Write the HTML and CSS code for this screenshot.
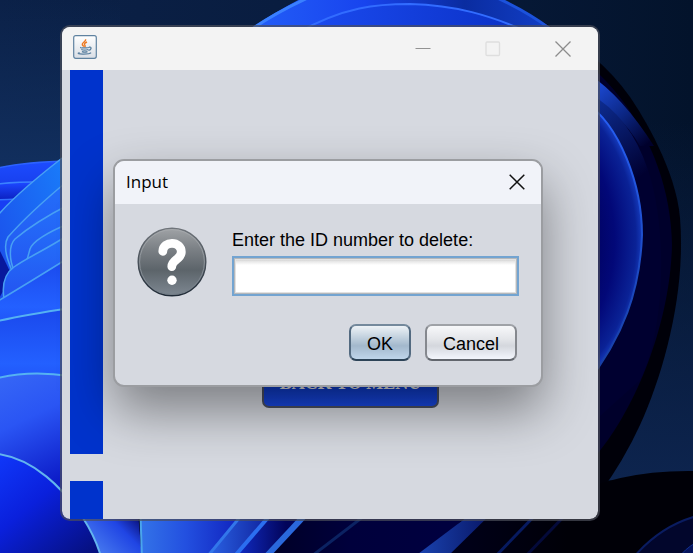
FILE: index.html
```html
<!DOCTYPE html>
<html lang="en">
<head>
<meta charset="utf-8">
<meta name="viewport" content="width=device-width, initial-scale=1">
<title>Input</title>
<link rel="stylesheet" href="styles.css">
</head>
<body>
<div class="desktop">
  <svg class="wallpaper" viewBox="0 0 693 553" preserveAspectRatio="xMidYMid slice" aria-hidden="true">
    <defs>
      <linearGradient id="sky" x1="0" y1="0" x2="1" y2="0"><stop offset="0" stop-color="#0b2148"/><stop offset=".6" stop-color="#081b3c"/><stop offset="1" stop-color="#03132b"/></linearGradient>
      <linearGradient id="glow" x1="0" y1="0" x2="0" y2="1"><stop offset="0" stop-color="#123060" stop-opacity="0"/><stop offset="1" stop-color="#123060"/></linearGradient>
      <linearGradient id="glowRight" x1="0" y1="0" x2="0" y2="1"><stop offset="0" stop-color="#0d244e" stop-opacity="0"/><stop offset="1" stop-color="#0d244e"/></linearGradient>
      <linearGradient id="arc" x1="0" y1="0" x2="1" y2="0"><stop offset="0" stop-color="#2460f8"/><stop offset=".4" stop-color="#1844ee"/><stop offset=".72" stop-color="#0a2ca0"/><stop offset="1" stop-color="#123fc8"/></linearGradient>
      <linearGradient id="arcIn" x1="0" y1="0" x2="1" y2="0"><stop offset="0" stop-color="#1c4cf2"/><stop offset="1" stop-color="#0a30c4"/></linearGradient>
      <linearGradient id="edge" gradientUnits="userSpaceOnUse" x1="600" y1="84" x2="650" y2="142"><stop offset="0" stop-color="#1b48d0"/><stop offset=".5" stop-color="#0b2684"/><stop offset="1" stop-color="#00002b"/></linearGradient>
      <linearGradient id="edge2" gradientUnits="userSpaceOnUse" x1="600" y1="100" x2="650" y2="170"><stop offset="0" stop-color="#0d2c90"/><stop offset="1" stop-color="#000030"/></linearGradient>
      <radialGradient id="bowl" gradientUnits="userSpaceOnUse" cx="520" cy="240" r="126" gradientTransform="translate(520 240) scale(1 1.35) translate(-520 -240)"><stop offset=".5" stop-color="#00005a"/><stop offset=".75" stop-color="#020878"/><stop offset=".92" stop-color="#0a2296"/><stop offset="1" stop-color="#1b48d0"/></radialGradient>
      <linearGradient id="rim" x1="0" y1="0" x2="0" y2="1"><stop offset="0" stop-color="#2760f8"/><stop offset="1" stop-color="#163c9e"/></linearGradient>
      <linearGradient id="p1" x1="0" y1="0" x2="0" y2="1"><stop offset="0" stop-color="#1d4cff"/><stop offset=".5" stop-color="#0a20c0"/><stop offset="1" stop-color="#1c44ff"/></linearGradient>
      <linearGradient id="p1b" gradientUnits="userSpaceOnUse" x1="0" y1="183" x2="0" y2="199"><stop offset="0" stop-color="#1c46ff"/><stop offset="1" stop-color="#0c22c4"/></linearGradient>
      <linearGradient id="p2" x1="0" y1="1" x2="1" y2="0"><stop offset="0" stop-color="#1c46e8"/><stop offset="1" stop-color="#1980fb"/></linearGradient>
      <linearGradient id="p3" x1="0" y1="0" x2="0" y2="1"><stop offset="0" stop-color="#2470fa"/><stop offset="1" stop-color="#2353f0"/></linearGradient>
      <linearGradient id="p4" x1="0" y1="0" x2="0" y2="1"><stop offset="0" stop-color="#1a48ec"/><stop offset=".6" stop-color="#2360ff"/><stop offset="1" stop-color="#1c4af0"/></linearGradient>
      <linearGradient id="p5" gradientUnits="userSpaceOnUse" x1="10" y1="375" x2="60" y2="480"><stop offset="0" stop-color="#3565f6"/><stop offset=".4" stop-color="#2a55f4"/><stop offset="1" stop-color="#0c1cc8"/></linearGradient>
      <linearGradient id="p6" x1="0" y1="0" x2=".8" y2="1"><stop offset="0" stop-color="#1038fa"/><stop offset=".45" stop-color="#0a20dc"/><stop offset="1" stop-color="#061080"/></linearGradient>
      <linearGradient id="p7" gradientUnits="userSpaceOnUse" x1="100" y1="553" x2="138" y2="515"><stop offset="0" stop-color="#4577ee"/><stop offset=".6" stop-color="#2045e4"/><stop offset="1" stop-color="#080c72"/></linearGradient>
      <linearGradient id="p8" x1="0" y1="0" x2="1" y2="0"><stop offset="0" stop-color="#3474e8"/><stop offset=".4" stop-color="#2350e0"/><stop offset="1" stop-color="#0a16b4"/></linearGradient>
      <linearGradient id="s1" x1="0" y1="0" x2="1" y2="0"><stop offset="0" stop-color="#2c66e8"/><stop offset="1" stop-color="#0a1690"/></linearGradient>
      <linearGradient id="s2" x1="0" y1="0" x2="1" y2="0"><stop offset="0" stop-color="#1230d0"/><stop offset=".6" stop-color="#02045a"/><stop offset="1" stop-color="#020450"/></linearGradient>
      <linearGradient id="s3" x1="0" y1="0" x2="1" y2="0"><stop offset="0" stop-color="#000024"/><stop offset=".4" stop-color="#00003c"/><stop offset="1" stop-color="#000040"/></linearGradient>
      <linearGradient id="s4" x1="0" y1="0" x2="1" y2="0"><stop offset="0" stop-color="#1c48b8"/><stop offset="1" stop-color="#06105c"/></linearGradient>
      <linearGradient id="floor" x1="0" y1="0" x2="1" y2="0"><stop offset=".6" stop-color="#00001c"/><stop offset=".8" stop-color="#000007"/></linearGradient>
    </defs>
    <rect width="693" height="553" fill="url(#sky)"/>
    <rect width="120" height="180" fill="url(#glow)"/>
    <rect x="590" y="120" width="103" height="360" fill="url(#glowRight)"/>

    <path d="M540 20Q600 54 630 97C643 116 676 170 680 218C686 290 665 370 640 425Q624 460 600 493H540Z" fill="#000009"/>
    <path d="M540 30Q592 60 622 100C652 140 671 190 672 245C670 330 630 420 590 462H540Z" fill="#00002b"/>
    <path d="M590 75Q622 96 654 146L640 146Q620 112 590 98Z" fill="url(#edge)"/>
    <path d="M590 94Q630 116 648 170C668 230 665 330 640 380L590 425Z" fill="url(#edge2)"/>
    <path d="M585 102C620 125 642 185 642 235C640 290 624 336 585 386Z" fill="url(#bowl)" stroke="url(#rim)" stroke-width="2"/>

    <path d="M240 36Q270 14 310 -6H488Q522 8 552 30V60H240Z" fill="url(#arc)"/>
    <path d="M245 34Q272 14 312 -4" fill="none" stroke="#3a80ff" stroke-width="3"/>
    <path d="M488 -6Q522 8 552 30" fill="none" stroke="#1c52dc" stroke-width="3"/>
    <path d="M295 34C345 6 378 4 410 4C455 5 490 15 530 33V60H295Z" fill="url(#arcIn)"/>
    <path d="M295 34C345 6 378 4 410 4C455 5 490 15 530 33" fill="none" stroke="#326cff" stroke-width="2"/>

    <g stroke="#48a0f4" stroke-width="1.5">
      <path d="M-2 168Q25 162 70 161V330H-2Z" fill="url(#p1)" stroke="#2c62ff"/>
      <path d="M-2 184Q20 181 70 182V260H-2Z" fill="url(#p1b)" stroke="#3b82ff"/>
      <path d="M-2 200Q20 198 70 199V280H-2Z" fill="#183ef4" stroke="#3070ff"/>
      <path d="M-2 215Q20 190 70 152V330H-2Z" fill="url(#p2)"/>
      <path d="M-2 247Q7 265 12 276L-2 300Z" fill="#08189c" stroke="none"/>
      <path d="M70 179Q30 212 8 237C2 247 8 262 15 278L70 280Z" fill="url(#p3)"/>
      <path d="M70 204Q35 222 15 239C8 246 10 262 14 270L70 280Z" fill="url(#p3)"/>
      <path d="M70 223Q34 238 30 249L27 260L70 280Z" fill="url(#p3)"/>
      <path d="M70 234C40 253 28 257 14 267C4 274 2 286 4 299L70 300Z" fill="url(#p3)"/>
      <path d="M-2 301Q20 288 70 257V340H-2Z" fill="url(#p4)"/>
      <path d="M-2 321Q25 315 70 308V400H-2Z" fill="url(#p4)" stroke="#55b2f2" stroke-width="2"/>
      <path d="M-2 378Q30 370 70 376V560H-2Z" fill="url(#p5)" stroke="#55b2f2" stroke-width="2"/>
    </g>
    <path d="M62 500H560Q616 470 693 471V560H62Z" fill="url(#floor)"/>
    <path d="M60 500H137L142 560H60Z" fill="url(#p7)"/>
    <path d="M-2 454C34 459 63 488 83 518Q96 538 102 560H-2Z" fill="url(#p6)" stroke="#63b5ee" stroke-width="2"/>
    <path d="M139 500L142 560H205L255 500Z" fill="url(#p8)"/>
    <path d="M140 500L142 560" stroke="#4aa5ec" stroke-width="2"/>
    <path d="M254 500L205 560H240L280 500Z" fill="url(#s1)"/>
    <path d="M254 500L207 557" stroke="#3276ea" stroke-width="3"/>
    <path d="M282 500L232 560H275L322 500Z" fill="url(#s2)"/>
    <path d="M283 500L234 557" stroke="#2b6ef0" stroke-width="4"/>
    <path d="M322 500L263 560H425L480 500Z" fill="url(#s3)"/>
    <path d="M319 500L264 559" stroke="#2a68dc" stroke-width="6"/>
    <path d="M385 500L308 559" stroke="#0b2262" stroke-width="3"/>
    <path d="M483 505L410 560H444L500 505Z" fill="url(#s4)"/>
    <path d="M545 505L492 560" stroke="#071a60" stroke-width="3"/>
    <path d="M575 505L522 560" stroke="#040a3a" stroke-width="3"/>
    <path d="M633 558Q660 526 697 516V560Z" fill="#02062c" stroke="#0a1c60" stroke-width="2"/>
    <path d="M677 560Q684 549 697 542V560Z" fill="#06145c" stroke="#12308e"/>
  </svg>

  <main class="window">
    <header class="titlebar">
      <svg class="java" viewBox="0 0 24 24" role="img" aria-label="Java">
        <defs><linearGradient id="tile" x1="0" y1="0" x2="0" y2="1"><stop offset="0" stop-color="#fff"/><stop offset="1" stop-color="#d9dee5"/></linearGradient></defs>
        <rect x=".7" y=".7" width="22.6" height="22.6" rx="2" fill="url(#tile)" stroke="#5f82a0" stroke-width="1.2"/>
        <path d="M12.6 4.2c1 2.2-3.9 3.2-3.3 5.3.2.9 1 1.400 1.600 2.100M14 7c-3 1.300-3 2.300-2 3.400.5.600.2 1.200-.4 1.700" fill="none" stroke="#ee7a22" stroke-width="1.400"/>
        <path d="M8 12.400c-2.300.7 7.500.8 8-.1M8.300 14.500c1.700.7 5 .7 7 0M8.900 16.600c1.700.6 4 .6 5.600 0M6.600 17.600c-6 1.800 9.800 2.300 11.400.1M16 12.200c2.900-.8 2.700 2.700-.5 3.200" fill="none" stroke="#587f9f" stroke-width="1.300"/>
      </svg>
      <div class="controls">
        <button type="button" aria-label="Minimize"><svg viewBox="0 0 16 16"><path d="M0.500 7.500h15" stroke="#929292"/></svg></button>
        <button type="button" aria-label="Maximize" disabled><svg viewBox="0 0 16 16"><rect x="1" y="1" width="13.500" height="13.500" rx="1" fill="none" stroke="#dedede" stroke-width="1.300"/></svg></button>
        <button type="button" aria-label="Close window"><svg viewBox="0 0 16 16"><path d="M.5 .5l15 15M15.500 .5l-15 15" stroke="#8c8c8c" stroke-width="1.300"/></svg></button>
      </div>
    </header>
    <div class="frame">
      <div class="rail"><div class="bar"></div><div class="bar bar-end"></div></div>
      <div class="stage"><button type="button" class="back">BACK TO MENU</button></div>
    </div>

    <form class="dialog" role="dialog" aria-labelledby="dialog-title">
      <header class="dialog-title">
        <h1 id="dialog-title">Input</h1>
        <button type="button" class="close" aria-label="Close"><svg viewBox="0 0 16 16"><path d="M.7 .7l14.600 14.600M15.300 .7L.7 15.300" stroke="#111" stroke-width="1.500"/></svg></button>
      </header>
      <div class="dialog-body">
        <svg class="question" viewBox="0 0 70 70" aria-hidden="true">
          <defs>
            <linearGradient id="ball" x1="0" y1="0" x2="0" y2="1"><stop offset="0" stop-color="#a0a3a6"/><stop offset=".3" stop-color="#7c8186"/><stop offset=".62" stop-color="#5c646a"/><stop offset="1" stop-color="#7e8892"/></linearGradient>
            <linearGradient id="ring" x1="0" y1="0" x2="0" y2="1"><stop offset="0" stop-color="#70757b"/><stop offset="1" stop-color="#202b37"/></linearGradient>
            <linearGradient id="shine" x1="0" y1="0" x2="0" y2="1"><stop offset="0" stop-color="#a6a9ac"/><stop offset="1" stop-color="#727c86"/></linearGradient>
          </defs>
          <circle cx="35" cy="35" r="33.800" fill="url(#ball)" stroke="url(#ring)" stroke-width="1.400"/>
          <circle cx="35" cy="35" r="32.400" fill="none" stroke="url(#shine)" stroke-width="1"/>
          <path d="M25.800 24.300C26 13.500 44.300 13.500 44.300 25C44.300 32.500 34.800 32.500 34.800 39.600" fill="none" stroke="#fff" stroke-width="8.800" stroke-linecap="round" stroke-linejoin="round"/>
          <circle cx="35" cy="53.300" r="4.700" fill="#fff"/>
        </svg>
        <div class="field">
          <label for="id-number">Enter the ID number to delete:</label>
          <input id="id-number" type="text" autocomplete="off">
        </div>
      </div>
      <footer class="actions">
        <button type="submit" class="button ok">OK</button>
        <button type="button" class="button">Cancel</button>
      </footer>
    </form>
  </main>
</div>
</body>
</html>
```
FILE: styles.css
```css
* { box-sizing: border-box; }

body {
  margin: 0;
  font-family: "Liberation Sans", Arial, sans-serif;
  font-size: 18px;
  color: #000;
}

button { font: inherit; padding: 0; border: 0; background: none; }
svg { display: block; }

.desktop {
  position: relative;
  display: flex;
  min-height: 100vh;
  padding: 25px 93px 32px 60px;
  overflow: hidden;
  background: #081b3c;
}

.wallpaper { position: absolute; inset: 0; width: 100%; height: 100%; }

.window {
  position: relative;
  flex: 1;
  display: flex;
  flex-direction: column;
  border: 2px solid rgba(75, 78, 90, 0.7);
  border-radius: 10px;
  background: #d6d9e0;
  background-clip: padding-box;
}

.titlebar {
  display: flex;
  justify-content: space-between;
  align-items: center;
  height: 43px;
  padding: 0 27px 0 11px;
  border-radius: 8px 8px 0 0;
  background: #f3f3f3;
}

.java { width: 24px; height: 24px; margin-bottom: 4px; }
.controls { display: flex; gap: 54px; }
.controls svg { width: 16px; height: 16px; }

.frame { flex: 1; display: flex; padding-left: 8px; }

.rail { display: flex; flex-direction: column; gap: 27px; width: 33px; }
.bar { flex: 1; background: #0033cc; }
.bar-end { flex: 0 0 38px; }

.stage {
  flex: 1;
  display: flex;
  justify-content: center;
  align-items: flex-end;
  padding-bottom: 111px;
}

.back {
  height: 50px;
  padding: 0 16px;
  border: 2px solid #4b5062;
  border-radius: 7px;
  background: linear-gradient(#1240d8, #0f3cc8 60%, #1848e4);
  font: bold 18px "Liberation Serif", "Times New Roman", serif;
  color: #e4e4e4;
}

.dialog {
  position: absolute;
  top: 132px;
  left: 51px;
  right: 55px;
  border: 2px solid #9b9da1;
  border-radius: 11px;
  background: #d6d9e0;
  box-shadow: 0 24px 52px rgba(0, 0, 0, 0.42);
}

.dialog-title {
  display: flex;
  justify-content: space-between;
  align-items: center;
  height: 43px;
  padding: 0 16px 2px 11px;
  border-radius: 9px 9px 0 0;
  background: #f1f3f9;
}

.dialog-title h1 {
  margin: 0;
  font: 17px "Open Sans", "Noto Sans", sans-serif;
}

.close svg { width: 16px; height: 16px; }

.dialog-body {
  display: flex;
  gap: 25px;
  padding: 23px 22px 0;
}

.question { flex: none; width: 70px; height: 70px; }

.field { flex: 1; display: flex; flex-direction: column; gap: 6px; padding-top: 3px; }
.field label { line-height: 20px; }

.field input {
  width: 100%;
  height: 40px;
  padding: 4px 8px;
  border: 2px solid #73a4d1;
  border-radius: 0;
  outline: 0;
  background: linear-gradient(#b0b0b0, #e4e4e4 3px, #fff 7px);
  box-shadow: inset 0 0 0 1px #b5b8bb, inset 0 0 0 2px #e2e2e2;
  font: inherit;
}

.actions {
  display: flex;
  justify-content: flex-end;
  gap: 14px;
  padding: 27px 24px 24px;
}

.button {
  height: 37px;
  padding: 4px 16px 0;
  border: 2px solid;
  border-color: #9fa2a7 #85888e #62666d;
  border-radius: 7px;
  background: linear-gradient(#f7f8fa, #e3e5e9 40%, #d4d7dd 60%, #f3f6fd);
}

.ok {
  border-color: #74899c #536a80 #2d4357;
  background: linear-gradient(#edf2f6, #b9cad9 42%, #a3b8cc 60%, #bfd5ea);
}
```
